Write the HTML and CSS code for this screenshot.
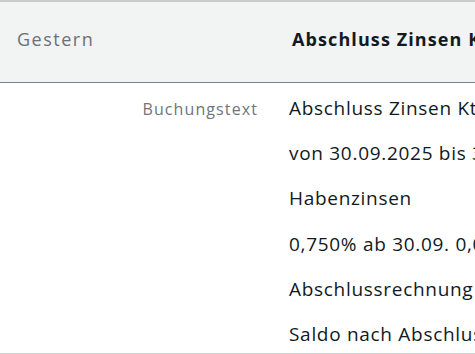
FILE: index.html
```html
<!DOCTYPE html>
<html lang="de">

<head>
    <meta charset="UTF-8">
    <meta name="viewport" content="width=device-width, initial-scale=1.0">
    <title>Umsatzdetails</title>
    <link rel="stylesheet" href="styles.css">
</head>

<body>
    <div class="booking">
        <div class="head">
            <div class="date">Gestern</div>
            <div class="title">Abschluss Zinsen Kto.</div>
        </div>
        <div class="details">
            <div class="label">Buchungstext</div>
            <div class="lines">
                <p>Abschluss Zinsen Kto. 1234567890</p>
                <p>von 30.09.2025 bis 31.12.2025</p>
                <p>Habenzinsen</p>
                <p>0,750% ab 30.09. 0,00 EUR</p>
                <p>Abschlussrechnung</p>
                <p>Saldo nach Abschluss</p>
            </div>
        </div>
    </div>
</body>

</html>
```

FILE: styles.css
```css
body {
    margin: 0;
    padding: 0;
    font-family: "Open Sans", Lato, sans-serif;
    background-color: #fff;
    overflow: hidden;
}

.booking {
    width: 475px;
    border-top: 2px solid #c9cccc;
    border-bottom: 1px solid #cfd1d1;
}

.head {
    display: grid;
    grid-template-columns: 292px 1fr;
    box-sizing: border-box;
    height: 81px;
    padding-top: 25px;
    background-color: #f2f3f3;
    border-bottom: 1px solid #7d8388;
    white-space: nowrap;
    overflow: hidden;
}

.date {
    padding-left: 17px;
    font-size: 18px;
    line-height: 24px;
    letter-spacing: 1.5px;
    color: #6b7178;
}

.title {
    font-size: 18px;
    line-height: 24px;
    letter-spacing: 1.1px;
    font-weight: bold;
    color: #111a22;
}

.details {
    display: grid;
    grid-template-columns: 258px 1fr;
    align-items: baseline;
    column-gap: 31px;
    box-sizing: border-box;
    height: 270px;
    padding-top: 3px;
    white-space: nowrap;
    overflow: hidden;
}

.label {
    text-align: right;
    font-size: 16px;
    line-height: 45px;
    letter-spacing: 1.1px;
    color: #6e757c;
}

.lines p {
    margin: 0;
    font-size: 19px;
    line-height: 45.2px;
    letter-spacing: 0.7px;
    color: #111a22;
}
```
